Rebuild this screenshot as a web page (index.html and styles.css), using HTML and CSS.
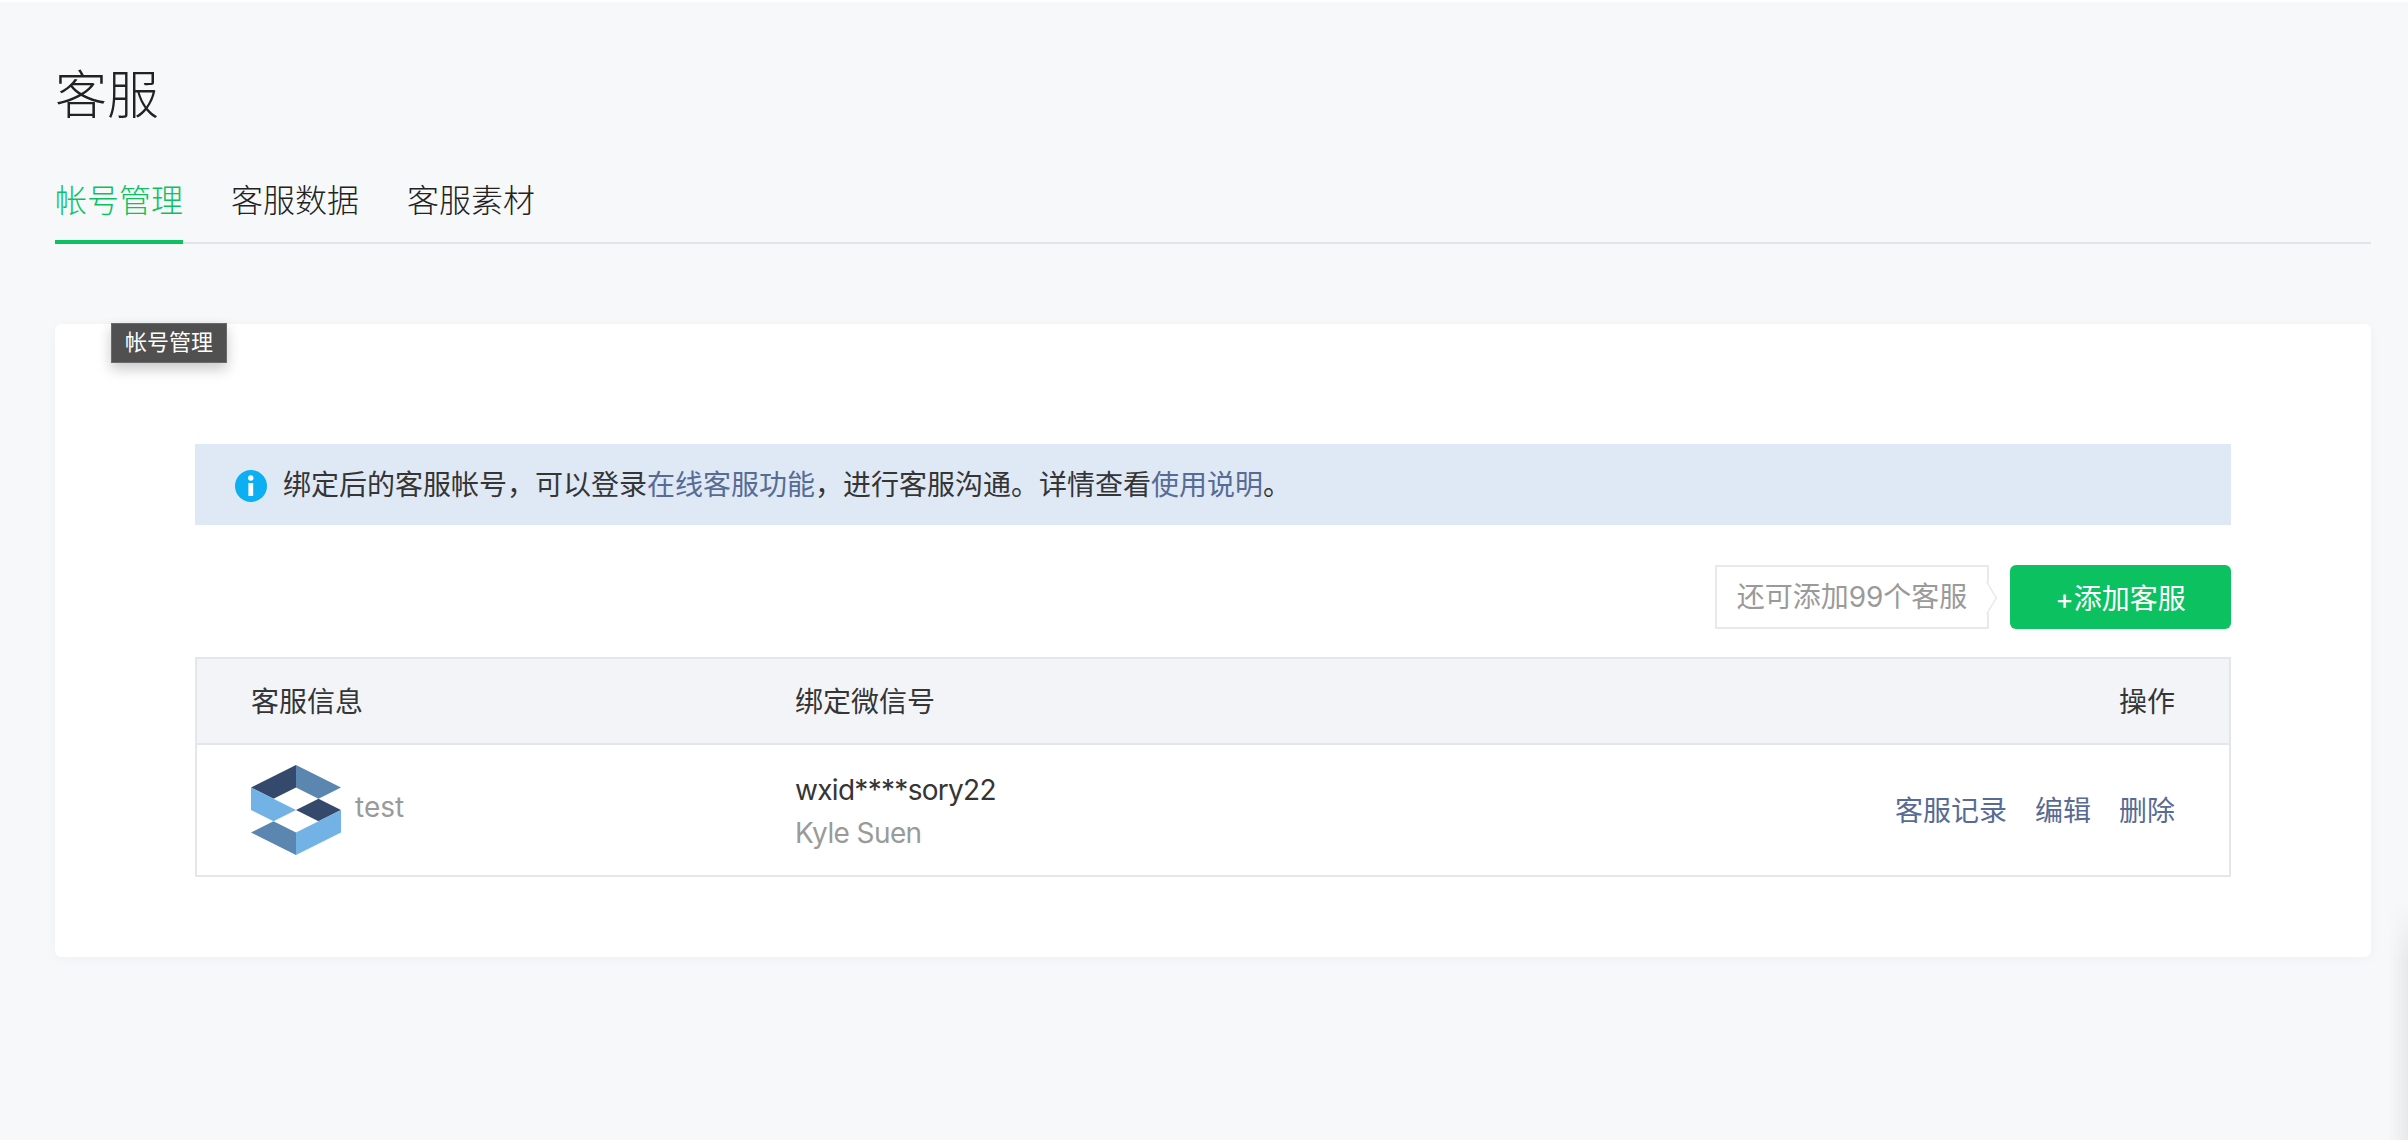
FILE: index.html
```html
<!DOCTYPE html>
<html lang="zh-CN">
<head>
  <meta charset="UTF-8">
  <meta name="viewport" content="width=device-width, initial-scale=1.0">
  <title>客服</title>
  <link rel="stylesheet" href="styles.css">
</head>
<body>
  <div class="page">
    <h1 class="page-title">客服</h1>
    <div class="tabs">
      <a class="tab active">帐号管理</a>
      <a class="tab">客服数据</a>
      <a class="tab">客服素材</a>
    </div>

    <div class="card">
      <div class="tooltip">帐号管理</div>

      <div class="notice">
        <svg class="notice-icon" viewBox="0 0 32 32">
          <circle cx="16" cy="16" r="16" fill="#0cb0f2"/>
          <circle cx="15.8" cy="8" r="2.7" fill="#fff"/>
          <rect x="13.4" y="13" width="4.8" height="13" fill="#fff"/>
        </svg>
        <span class="notice-text">绑定后的客服帐号，可以登录<a class="link">在线客服功能</a>，进行客服沟通。详情查看<a class="link">使用说明</a>。</span>
      </div>

      <div class="toolbar">
        <div class="counter">还可添加99个客服</div>
        <button class="btn-add">+添加客服</button>
      </div>

      <div class="table">
        <div class="row row-head">
          <div>客服信息</div>
          <div>绑定微信号</div>
          <div class="cell-right">操作</div>
        </div>
        <div class="row row-body">
          <div class="account">
            <svg class="avatar" viewBox="0 0 90 90">
              <polygon points="45,0 45,22.5 22.5,33.75 0,22.5" fill="#34496b"/>
              <polygon points="45,0 90,22.5 67.5,33.75 45,22.5" fill="#5a86b0"/>
              <polygon points="0,22.5 22.5,33.75 45,45 22.5,56.25 0,45" fill="#72b2e4"/>
              <polygon points="45,45 67.5,33.75 90,45 67.5,56.25" fill="#34496b"/>
              <polygon points="90,45 90,67.5 45,90 45,67.5 67.5,56.25" fill="#72b2e4"/>
              <polygon points="22.5,56.25 45,67.5 45,90 0,67.5" fill="#5a86b0"/>
            </svg>
            <span class="account-name">test</span>
          </div>
          <div class="wx">
            <div class="wx-id">wxid****sory22</div>
            <div class="wx-name">Kyle Suen</div>
          </div>
          <div class="actions">
            <a class="link">客服记录</a>
            <a class="link">编辑</a>
            <a class="link">删除</a>
          </div>
        </div>
      </div>
    </div>
  </div>
  <div class="edge-shadow"></div>
</body>
</html>
```

FILE: styles.css
```css
* {
    margin: 0;
    padding: 0;
    box-sizing: border-box;
}

html, body {
    height: 100%;
}

body {
    font-family: "Inter", "Noto Sans CJK SC", sans-serif;
    background: #f7f8fa;
    color: #353535;
    overflow: hidden;
    position: relative;
}

.page {
    height: 100%;
    padding: 2px 37px 0 55px;
    border-top: 2px solid #fff;
}

.page-title {
    font-size: 52px;
    font-weight: 300;
    color: #222;
    line-height: 72px;
    margin-top: 56px;
}

.tabs {
    display: flex;
    gap: 48px;
    margin-top: 46px;
    border-bottom: 2px solid #e2e4e8;
}

.tab {
    font-size: 32px;
    font-weight: 300;
    color: #222;
    line-height: 46px;
    padding-bottom: 16px;
    margin-bottom: -2px;
    border-bottom: 4px solid transparent;
}

.tab.active {
    color: #0cc160;
    border-bottom-color: #0cc160;
}

.card {
    position: relative;
    margin-top: 80px;
    height: 633px;
    padding: 120px 140px 0;
    background: #fff;
    border-radius: 6px;
    box-shadow: 0 2px 12px rgba(40, 50, 70, 0.04);
}

.tooltip {
    position: absolute;
    left: 56px;
    top: -1px;
    width: 116px;
    height: 40px;
    background: #505050;
    border: 1px solid #6a6a6a;
    color: #fff;
    font-size: 22px;
    line-height: 36px;
    text-align: center;
    box-shadow: 0 6px 14px rgba(0, 0, 0, 0.22);
}

.notice {
    display: flex;
    align-items: center;
    height: 81px;
    padding-left: 40px;
    background: #dfe9f5;
    font-size: 28px;
}

.notice-icon {
    width: 32px;
    height: 32px;
    margin-right: 16px;
    margin-top: 3px;
}

.notice-text {
    padding-bottom: 4px;
}

.link {
    color: #576b95;
}

.toolbar {
    display: flex;
    justify-content: flex-end;
    gap: 21px;
    margin-top: 40px;
}

.counter {
    position: relative;
    width: 274px;
    height: 64px;
    border: 2px solid #e8e9ed;
    color: #9a9a9a;
    font-size: 28px;
    line-height: 61px;
    text-align: center;
}

.counter::before {
    content: '';
    position: absolute;
    right: -12px;
    top: 19px;
    width: 22px;
    height: 22px;
    background: #fff;
    border-top: 2px solid #e8e9ed;
    border-right: 2px solid #e8e9ed;
    transform: scaleX(0.6) rotate(45deg);
}

.btn-add {
    width: 221px;
    height: 64px;
    border: none;
    border-radius: 6px;
    background: #0cc160;
    color: #fff;
    font-family: inherit;
    font-size: 28px;
}

.table {
    margin-top: 28px;
    border: 2px solid #e4e6eb;
    font-size: 28px;
}

.row {
    display: grid;
    grid-template-columns: 544px 1fr auto;
    align-items: center;
    padding: 0 54px;
}

.row-head {
    height: 86px;
    padding-bottom: 2px;
    background: #f3f4f8;
    border-bottom: 2px solid #e4e6eb;
}

.row-body {
    height: 130px;
}

.account {
    display: flex;
    align-items: center;
}

.avatar {
    width: 90px;
    height: 90px;
    margin-right: 14px;
}

.account-name {
    color: #9a9a9a;
    margin-top: -6px;
}

.wx {
    padding-top: 3px;
}

.wx-id,
.wx-name {
    line-height: 43px;
    letter-spacing: -0.6px;
}

.wx-id {
    letter-spacing: -0.7px;
}

.wx-name {
    color: #9a9a9a;
}

.actions {
    display: flex;
    gap: 28px;
    padding-bottom: 2px;
}

.edge-shadow {
    position: absolute;
    right: 0;
    bottom: 0;
    width: 20px;
    height: 240px;
    background: linear-gradient(to right, rgba(0, 0, 0, 0), rgba(0, 0, 0, 0.06));
    -webkit-mask-image: linear-gradient(to bottom, transparent, #000 25%);
    mask-image: linear-gradient(to bottom, transparent, #000 25%);
}
```
